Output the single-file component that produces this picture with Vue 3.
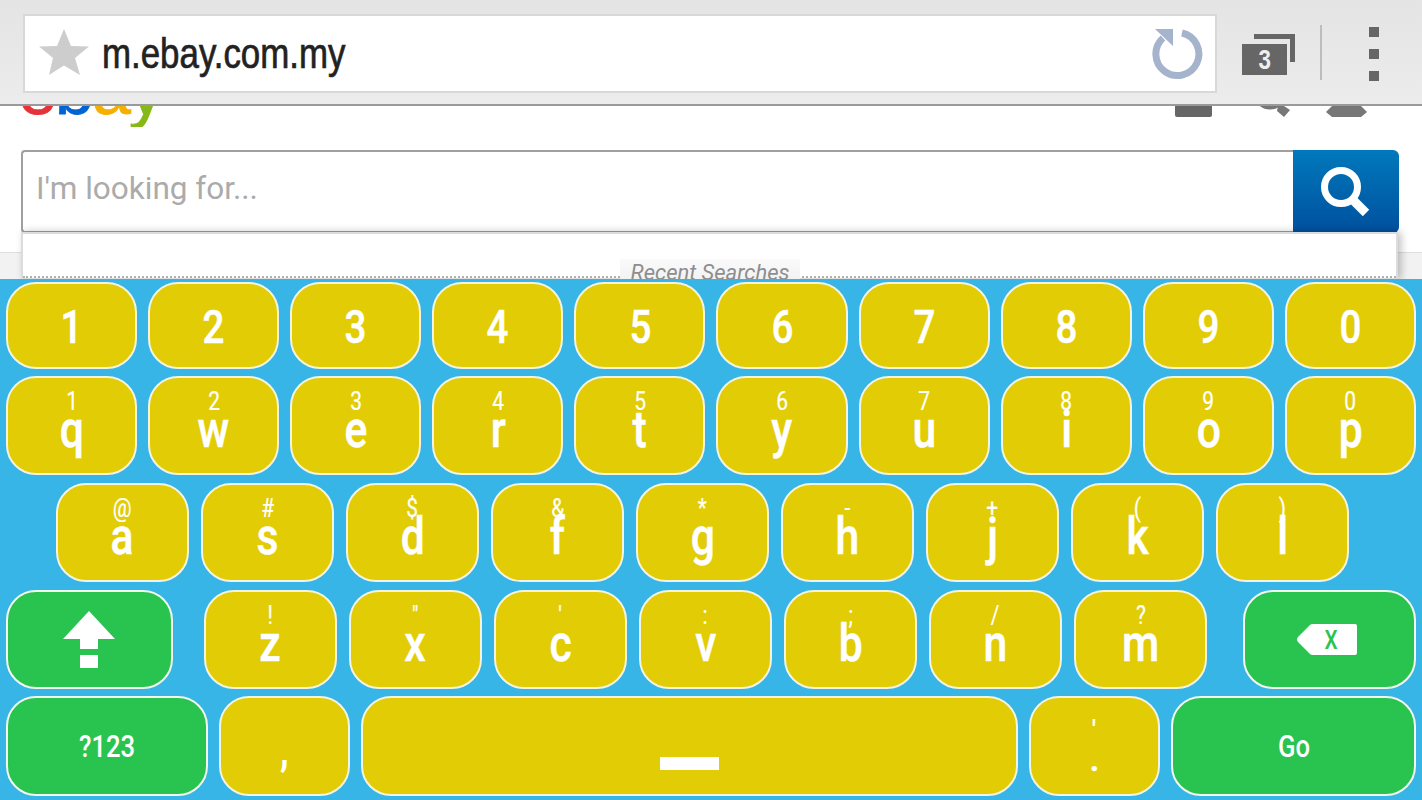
<template>
  <div class="screen">
    <header class="toolbar">
      <div class="address">
        <svg class="star" viewBox="0 0 50 47" width="50" height="47">
          <polygon points="25,0 32,17 50,17.500 36,29 41,46 25,36.500 10,46 14,29 0,17.500 18,17" fill="#cdcdcd" />
        </svg>
        <span class="url">m.ebay.com.my</span>
        <svg class="reload" viewBox="0 0 52 52" width="52" height="52">
          <path d="M30 5 A21.500 21.500 0 1 1 11 10" fill="none" stroke="#a5b4cc" stroke-width="7" />
          <polygon points="3,1 21,1 21,18" fill="#a5b4cc" />
        </svg>
      </div>
      <div class="tabs">
        <svg class="tabs-back" viewBox="0 0 42 29" width="42" height="29">
          <path d="M0 0 H41 V28 H36 V5 H0 Z" fill="#666" />
        </svg>
        <div class="tabs-front"><span>3</span></div>
      </div>
      <div class="divider"></div>
      <div class="menu">
        <i></i>
        <i></i>
        <i></i>
      </div>
    </header>

    <main class="page">
      <div class="site-head">
        <div class="logo">
          <span class="e">e</span><span class="b">b</span><span class="a">a</span><span class="y">y</span>
        </div>
        <svg class="site-icons" viewBox="0 0 192 12" width="192" height="12">
          <path d="M0 0 H37 V9 a2 2 0 0 1 -2 2 H2 a2 2 0 0 1 -2 -2 Z" fill="#666" />
          <circle cx="95" cy="-13" r="14" fill="none" stroke="#777" stroke-width="5" />
          <polygon points="103,0 109,0 115,4 109,11 102,5" fill="#777" />
          <polygon points="157,0 186,0 192,6 186,11 157,11 151,6" fill="#777" />
        </svg>
      </div>
      <div class="search">
        <div class="search-input">I'm looking for...</div>
        <button class="search-btn">
          <svg viewBox="0 0 52 52" width="52" height="52">
            <circle cx="21" cy="21" r="16.500" fill="none" stroke="#fff" stroke-width="7" />
            <path d="M32 33 L46 47" stroke="#fff" stroke-width="9" />
          </svg>
        </button>
      </div>
      <div class="suggest">
        <div class="suggest-line"></div>
        <div class="suggest-label">Recent Searches</div>
      </div>
    </main>

    <section class="keyboard">
      <div v-for="(row, r) in rows" :key="r" class="row" :class="row.name">
        <div v-for="k in row.keys" :key="k.id || k.main" class="key" :class="k.cls">
          <svg v-if="k.cls === 'shift'" viewBox="0 0 52 57" width="52" height="57">
            <polygon points="26,0 52,28 35,28 35,38 17,38 17,28 0,28" fill="#fff" />
            <rect x="17" y="44" width="18" height="13" fill="#fff" />
          </svg>
          <svg v-else-if="k.cls === 'back'" viewBox="0 0 60 31" width="60" height="31">
            <path d="M13 1 Q14 0 16 0 H58 Q60 0 60 2 V29 Q60 31 58 31 H16 Q14 31 13 30 L1 18 Q-1 15.500 1 13 Z" fill="#fff" />
          </svg>
          <span v-if="k.cls === 'back'" class="back-x">X</span>
          <template v-else>
            <span v-if="k.hint" class="hint">{{ k.hint }}</span>
            <span v-if="k.main" class="main">{{ k.main }}</span>
          </template>
        </div>
      </div>
    </section>
  </div>
</template>

<script setup>
const digits = ['1', '2', '3', '4', '5', '6', '7', '8', '9', '0']

const pair = (main, hint) => ({ main, hint, cls: 'letter' })

const rows = [
  { name: 'row-num', keys: digits.map((d) => ({ main: d, cls: 'digit' })) },
  {
    name: 'row-q',
    keys: 'qwertyuiop'.split('').map((c, i) => pair(c, digits[i]))
  },
  {
    name: 'row-a',
    keys: [
      pair('a', '@'),
      pair('s', '#'),
      pair('d', '$'),
      pair('f', '&'),
      pair('g', '*'),
      pair('h', '-'),
      pair('j', '+'),
      pair('k', '('),
      pair('l', ')')
    ]
  },
  {
    name: 'row-z',
    keys: [
      { id: 'shift', cls: 'shift' },
      pair('z', '!'),
      pair('x', '"'),
      pair('c', "'"),
      pair('v', ':'),
      pair('b', ';'),
      pair('n', '/'),
      pair('m', '?'),
      { id: 'back', cls: 'back' }
    ]
  },
  {
    name: 'row-bottom',
    keys: [
      { main: '?123', cls: 'action sym' },
      { main: ',', cls: 'comma' },
      { id: 'space', cls: 'space' },
      { main: '.', hint: "'", cls: 'letter dot' },
      { main: 'Go', cls: 'action go' }
    ]
  }
]
</script>

<style>
html,
body {
  margin: 0;
  background: #fff;
}
</style>

<style scoped>
.screen {
  width: 1422px;
  height: 800px;
  display: flex;
  flex-direction: column;
  overflow: hidden;
  font-family: "Liberation Sans", sans-serif;
}

/* browser chrome */
.toolbar {
  height: 104px;
  flex: none;
  display: flex;
  align-items: flex-start;
  background: linear-gradient(#e4e4e4, #ececec);
  border-bottom: 2px solid #9a9a9a;
  padding-left: 23px;
  position: relative;
  z-index: 2;
}

.address {
  width: 1194px;
  height: 79px;
  margin-top: 14px;
  box-sizing: border-box;
  border: 2px solid #d8d8d8;
  background: #fff;
  display: flex;
  align-items: center;
  padding: 0 11px 0 14px;
}

.star {
  flex: none;
  margin-bottom: 3px;
}

.url {
  flex: 1;
  margin-left: 13px;
  font-size: 42px;
  color: #222;
  -webkit-text-stroke: 0.7px #222;
  transform: scaleX(0.83);
  transform-origin: left center;
}

.reload {
  flex: none;
}

.tabs {
  position: relative;
  width: 54px;
  height: 42px;
  margin: 34px 0 0 25px;
}

.tabs-back {
  position: absolute;
  right: 0;
  top: 0;
}

.tabs-front {
  position: absolute;
  left: 0;
  top: 10px;
  width: 45px;
  height: 31px;
  background: #666;
  color: #eee;
  font-size: 28px;
  line-height: 31px;
  font-weight: 700;
  text-align: center;
}

.tabs-front span {
  display: inline-block;
  transform: scaleX(0.8);
}

.divider {
  width: 2px;
  height: 55px;
  margin: 25px 0 0 24px;
  background: #bdbdbd;
}

.menu {
  display: flex;
  flex-direction: column;
  gap: 12px;
  margin: 27px 0 0 47px;
}

.menu i {
  display: block;
  width: 10px;
  height: 10px;
  background: #666;
}

/* ebay page behind the keyboard */
.page {
  height: 173px;
  flex: none;
  overflow: hidden;
  background: linear-gradient(#fff 146px, #dfdfdf 146px, #dfdfdf 147px, #f2f2f2 147px);
}

.site-head {
  height: 44px;
  display: flex;
  justify-content: space-between;
  padding: 0 55px 0 18px;
}

.logo {
  height: 21px;
  overflow: hidden;
  font-size: 70px;
  line-height: 70px;
  letter-spacing: -2px;
}

.logo span {
  display: inline-block;
  margin-top: -51px;
  vertical-align: top;
  -webkit-text-stroke: 0.8px currentColor;
}

.e {
  color: #e53238;
}

.b {
  color: #0064d2;
}

.a {
  color: #f5af02;
}

.y {
  color: #86b817;
}

.search {
  margin: 0 23px 0 21px;
  height: 83px;
  display: flex;
}

.search-input {
  flex: 1;
  box-sizing: border-box;
  border: 2px solid #a0a0a0;
  border-right: none;
  border-radius: 4px 0 0 4px;
  background: #fff;
  padding-left: 13px;
  font-family: Roboto, sans-serif;
  font-size: 31.500px;
  line-height: 74px;
  color: #ababab;
}

.search-btn {
  width: 106px;
  padding: 0;
  border: none;
  border-radius: 0 6px 6px 0;
  background: linear-gradient(#0079bc, #00509e);
  display: flex;
  align-items: center;
  justify-content: center;
}

.suggest {
  position: relative;
  margin: -1px 24px 0 21px;
  height: 48px;
  box-sizing: border-box;
  background: #fff;
  border: 2px solid #dcdcdc;
  box-shadow: 3px 0 8px rgba(0, 0, 0, 0.25);
}

.suggest-line {
  position: absolute;
  left: 0;
  right: 0;
  top: 42px;
  border-top: 2px dotted #b0b0b0;
}

.suggest-label {
  position: absolute;
  left: 597px;
  top: 25px;
  width: 180px;
  height: 30px;
  background: linear-gradient(#fafafa, #efefef);
  text-align: center;
  font-family: Roboto, sans-serif;
  font-style: italic;
  font-size: 22px;
  line-height: 27px;
  color: #8e8e8e;
}

/* keyboard */
.keyboard {
  flex: 1;
  background: #36b5e6;
  padding-top: 3px;
  display: flex;
  flex-direction: column;
  gap: 7px;
}

.row {
  display: flex;
  gap: 11px;
  padding-left: 6px;
  height: 99px;
  flex: none;
}

.row-num {
  height: 87px;
}

.row-a,
.row-z {
  gap: 12px;
  margin-top: 1px;
}

.row-a {
  padding-left: 56px;
}

.row-bottom {
  height: 100px;
}

.key {
  position: relative;
  box-sizing: border-box;
  width: 131px;
  height: 100%;
  border: 2px solid #f4f3e2;
  border-radius: 30px;
  background: #e2cc05;
  color: #fff;
  display: flex;
  flex-direction: column;
  align-items: center;
  flex: none;
}

.row-q .key,
.row-num .key {
  width: 131.100px;
}

.row-a .key,
.row-z .letter {
  width: 133px;
}

.main,
.hint {
  display: inline-block;
  font-family: Roboto, "Liberation Sans", sans-serif;
}

.digit {
  justify-content: center;
}

.digit .main {
  font-size: 47px;
  font-weight: 500;
  line-height: 87px;
  margin-top: 1px;
  -webkit-text-stroke: 0.5px #fff;
  transform: scaleX(0.82);
}

.hint {
  font-size: 25px;
  line-height: 24px;
  margin-top: 12px;
  -webkit-text-stroke: 0.2px #fff;
  transform: scaleX(0.84);
}

.letter .main {
  font-size: 52px;
  font-weight: 500;
  line-height: 40px;
  margin-top: -4px;
  -webkit-text-stroke: 0.5px #fff;
  transform: scaleX(0.82);
}

.shift,
.back,
.action {
  background: #29c44f;
  border-color: #f2f8ee;
  justify-content: center;
}

.shift {
  width: 167px;
  margin-right: 19px;
}

.shift svg {
  margin-left: -2px;
}

.back {
  width: 173px;
  margin-left: 24px;
}

.back svg {
  margin-left: -6px;
}

.back-x {
  position: absolute;
  left: 71px;
  top: 30px;
  width: 30px;
  text-align: center;
  color: #29c44f;
  font-family: Roboto, sans-serif;
  font-size: 26px;
  font-weight: 500;
  line-height: 36px;
  transform: scaleX(0.8);
}

.action .main {
  font-size: 32px;
  font-weight: 500;
  line-height: 40px;
  margin-top: -1px;
  transform: scaleX(0.8);
}

.sym {
  width: 202px;
}

.go {
  width: 245px;
}

.comma {
  justify-content: flex-end;
}

.comma .main {
  font-size: 44px;
  font-weight: 700;
  line-height: 40px;
  margin-bottom: 24px;
  transform: scaleX(0.8);
}

.space {
  width: 657px;
}

.space::after {
  content: "";
  width: 59px;
  height: 13px;
  background: #fff;
  margin-top: 59px;
}

.dot .hint {
  margin-top: 20px;
  font-weight: 700;
}

.letter.dot .main {
  font-size: 36px;
  line-height: 34px;
  margin-top: 0;
  transform: none;
}
</style>
